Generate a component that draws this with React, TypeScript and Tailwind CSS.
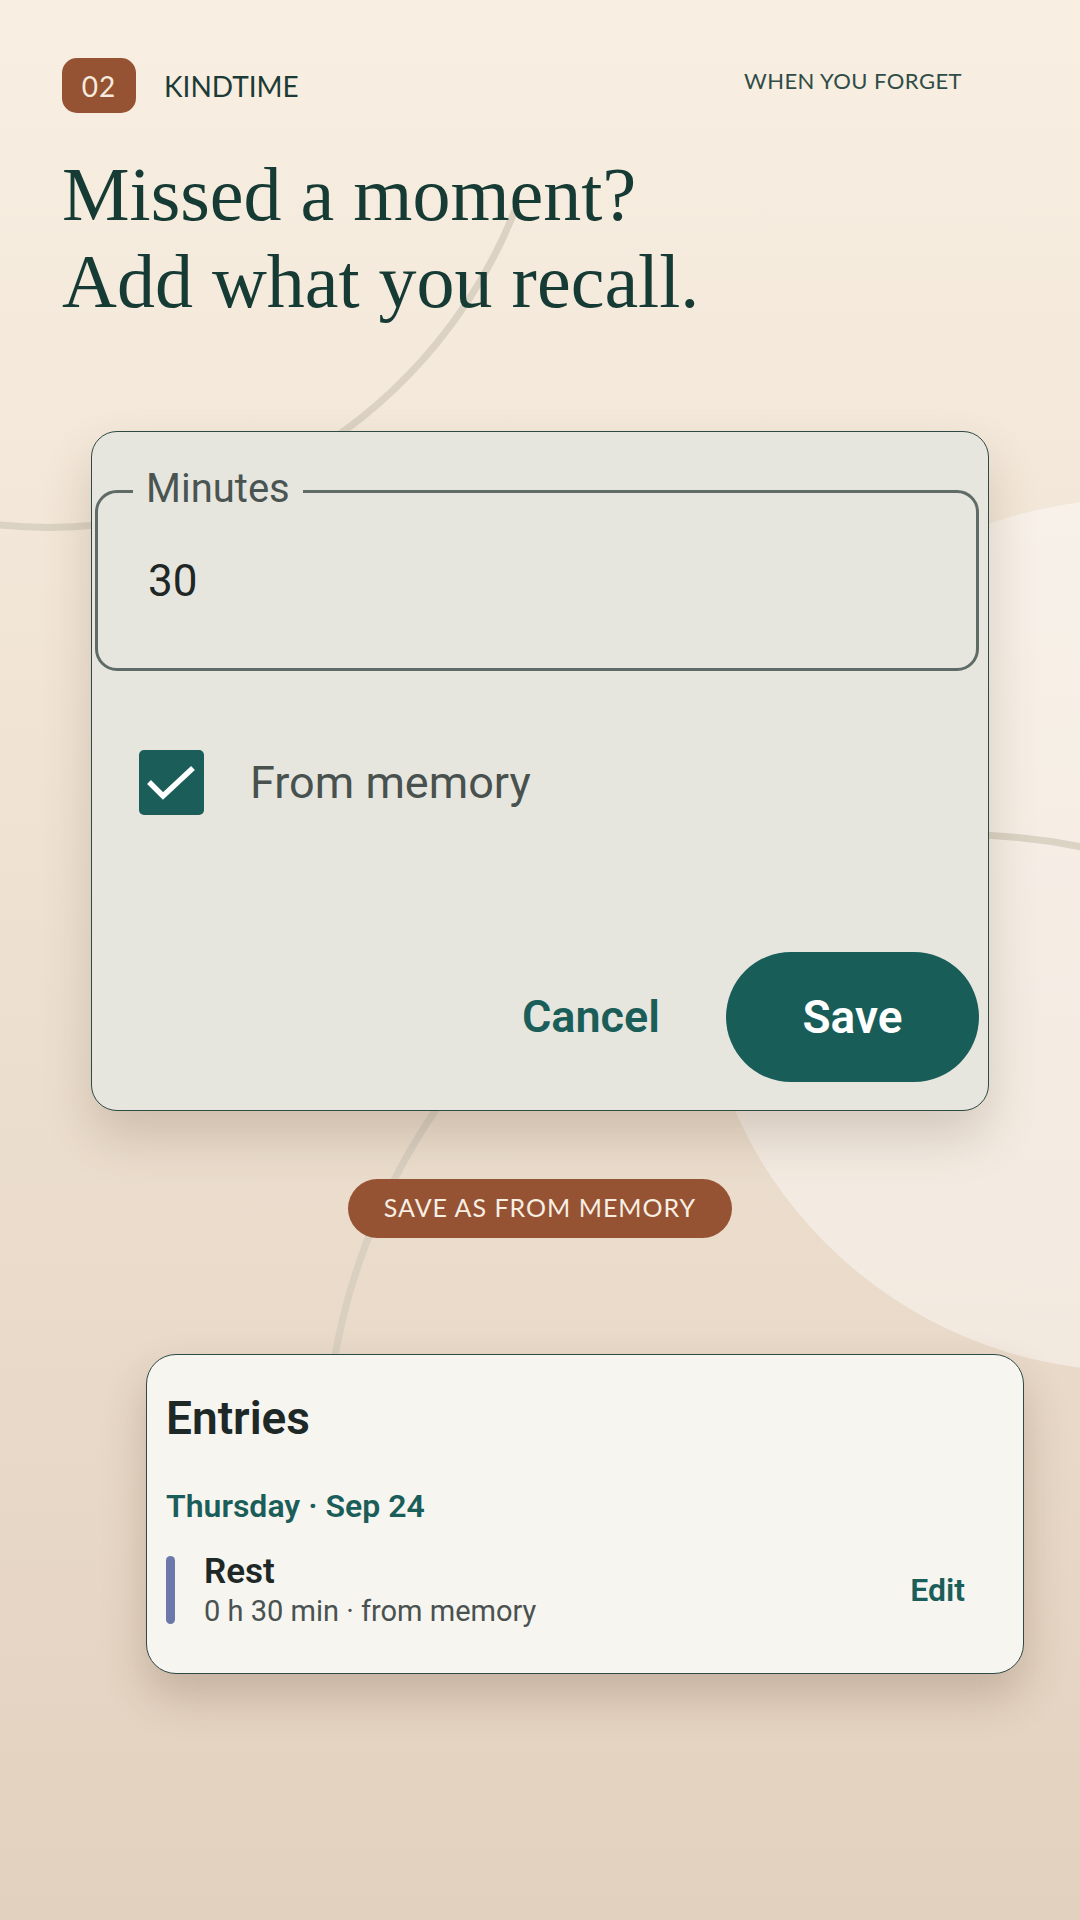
const sans = "font-['Lato','Noto_Sans',sans-serif]";
const roboto = "font-['Roboto','Noto_Sans',sans-serif]";

// background arcs and the soft disc on the right
const Backdrop = () => (
  <svg
    className="absolute inset-0 pointer-events-none"
    width="1080"
    height="1920"
    viewBox="0 0 1080 1920"
    fill="none"
  >
    <circle cx="1134" cy="935" r="436" fill="#ffffff" fillOpacity="0.42" />
    <path
      d="M517 205 A502 502 0 0 1 -10 524"
      stroke="#d6cebe"
      strokeOpacity="0.85"
      strokeWidth="7"
    />
    <path
      d="M1120 856 A632 632 0 0 0 328 1525"
      stroke="#d6cebe"
      strokeOpacity="0.85"
      strokeWidth="7"
    />
  </svg>
);

const CheckMark = () => (
  <svg width="65" height="65" viewBox="0 0 65 65" fill="none">
    <polyline points="10,32 24,46 54,18" stroke="#ffffff" strokeWidth="5.5" />
  </svg>
);

const App = () => {
  return (
    <div className="relative w-[1080px] min-h-[1920px] overflow-hidden bg-linear-to-b from-[#f8efe2] to-[#e3d1bf]">
      <Backdrop />

      <div className="relative">
        {/* top bar */}
        <div className={`flex items-center justify-between pt-[58px] pl-[62px] pr-[118px] ${sans}`}>
          <div className="flex items-center gap-[28px]">
            <div className="flex h-[55px] w-[74px] items-center justify-center rounded-[15px] bg-[#955334] text-[28px] leading-none tracking-[0.04em] text-[#f7ebdd]">
              02
            </div>
            <span className="text-[28px] leading-none text-[#1d3b36]">KINDTIME</span>
          </div>
          <span className="-mt-[10px] text-[22px] leading-none tracking-[0.02em] text-[#2f4c46]">
            WHEN YOU FORGET
          </span>
        </div>

        <h1 className="mt-[38px] pl-[62px] font-['Liberation_Serif','Times_New_Roman',serif] text-[76px] leading-[87px] text-[#163a34]">
          Missed a moment?
          <br />
          Add what you recall.
        </h1>

        {/* dialog */}
        <div
          className={`mx-[91px] mt-[106px] rounded-[26px] border border-[#2d4a44] bg-[#e6e6df] pl-[3px] pr-[9px] pt-[58px] pb-[28px] shadow-[0_26px_50px_rgba(90,64,40,0.2)] ${roboto}`}
        >
          <div className="relative flex h-[181px] items-center rounded-[22px] border-[3px] border-[#5f6b66] pl-[50px]">
            <span className="absolute -top-[30px] left-[35px] bg-[#e6e6df] px-[13px] text-[40px] leading-[52px] text-[#4a5551]">
              Minutes
            </span>
            <span className="text-[44px] leading-[52px] text-[#1f2725]">30</span>
          </div>

          <div className="mt-[79px] flex items-center gap-[46px] pl-[44px]">
            <div className="flex h-[65px] w-[65px] items-center justify-center rounded-[5px] bg-[#1b5e59]">
              <CheckMark />
            </div>
            <span className="text-[45px] leading-[52px] text-[#49514e]">From memory</span>
          </div>

          <div className="mt-[137px] flex items-center justify-end gap-[66px]">
            <span className="text-[45px] font-semibold leading-[54px] text-[#1b5e59]">Cancel</span>
            <div className="flex h-[130px] w-[253px] items-center justify-center rounded-full bg-[#195d59] text-[46px] font-semibold leading-[54px] text-white">
              Save
            </div>
          </div>
        </div>

        {/* saved-as badge */}
        <div className="-mt-[2px] pt-[70px] flex justify-center">
          <div
            className={`flex h-[59px] w-[384px] items-center justify-center rounded-full bg-[#955334] pb-[2px] text-[25px] leading-none tracking-[0.04em] text-[#f8eee2] ${sans}`}
          >
            SAVE AS FROM MEMORY
          </div>
        </div>

        {/* entries */}
        <div
          className={`ml-[146px] mt-[116px] w-[878px] rounded-[30px] border border-[#2d4a44] bg-[#f6f5f0] pt-[36px] pb-[44px] pl-[19px] pr-[58px] shadow-[0_22px_44px_rgba(90,64,40,0.24)] ${roboto}`}
        >
          <h2 className="text-[46px] font-semibold leading-[54px] text-[#1e2826]">Entries</h2>
          <div className="mt-[41px] text-[32px] font-semibold leading-[40px] text-[#1b5e59]">
            Thursday · Sep 24
          </div>
          <div className="mt-[25px] flex items-center">
            <div className="flex flex-1 items-stretch gap-[29px]">
              <div className="my-[5px] w-[9px] rounded-full bg-[#6c78a9]" />
              <div>
                <div className="text-[35px] font-semibold leading-[42px] text-[#1e2826]">Rest</div>
                <div className="text-[29px] leading-[36px] text-[#4a5250]">0 h 30 min · from memory</div>
              </div>
            </div>
            <span className="text-[32px] font-semibold leading-[40px] text-[#1b5e59]">Edit</span>
          </div>
        </div>
      </div>
    </div>
  );
};

export default App;
